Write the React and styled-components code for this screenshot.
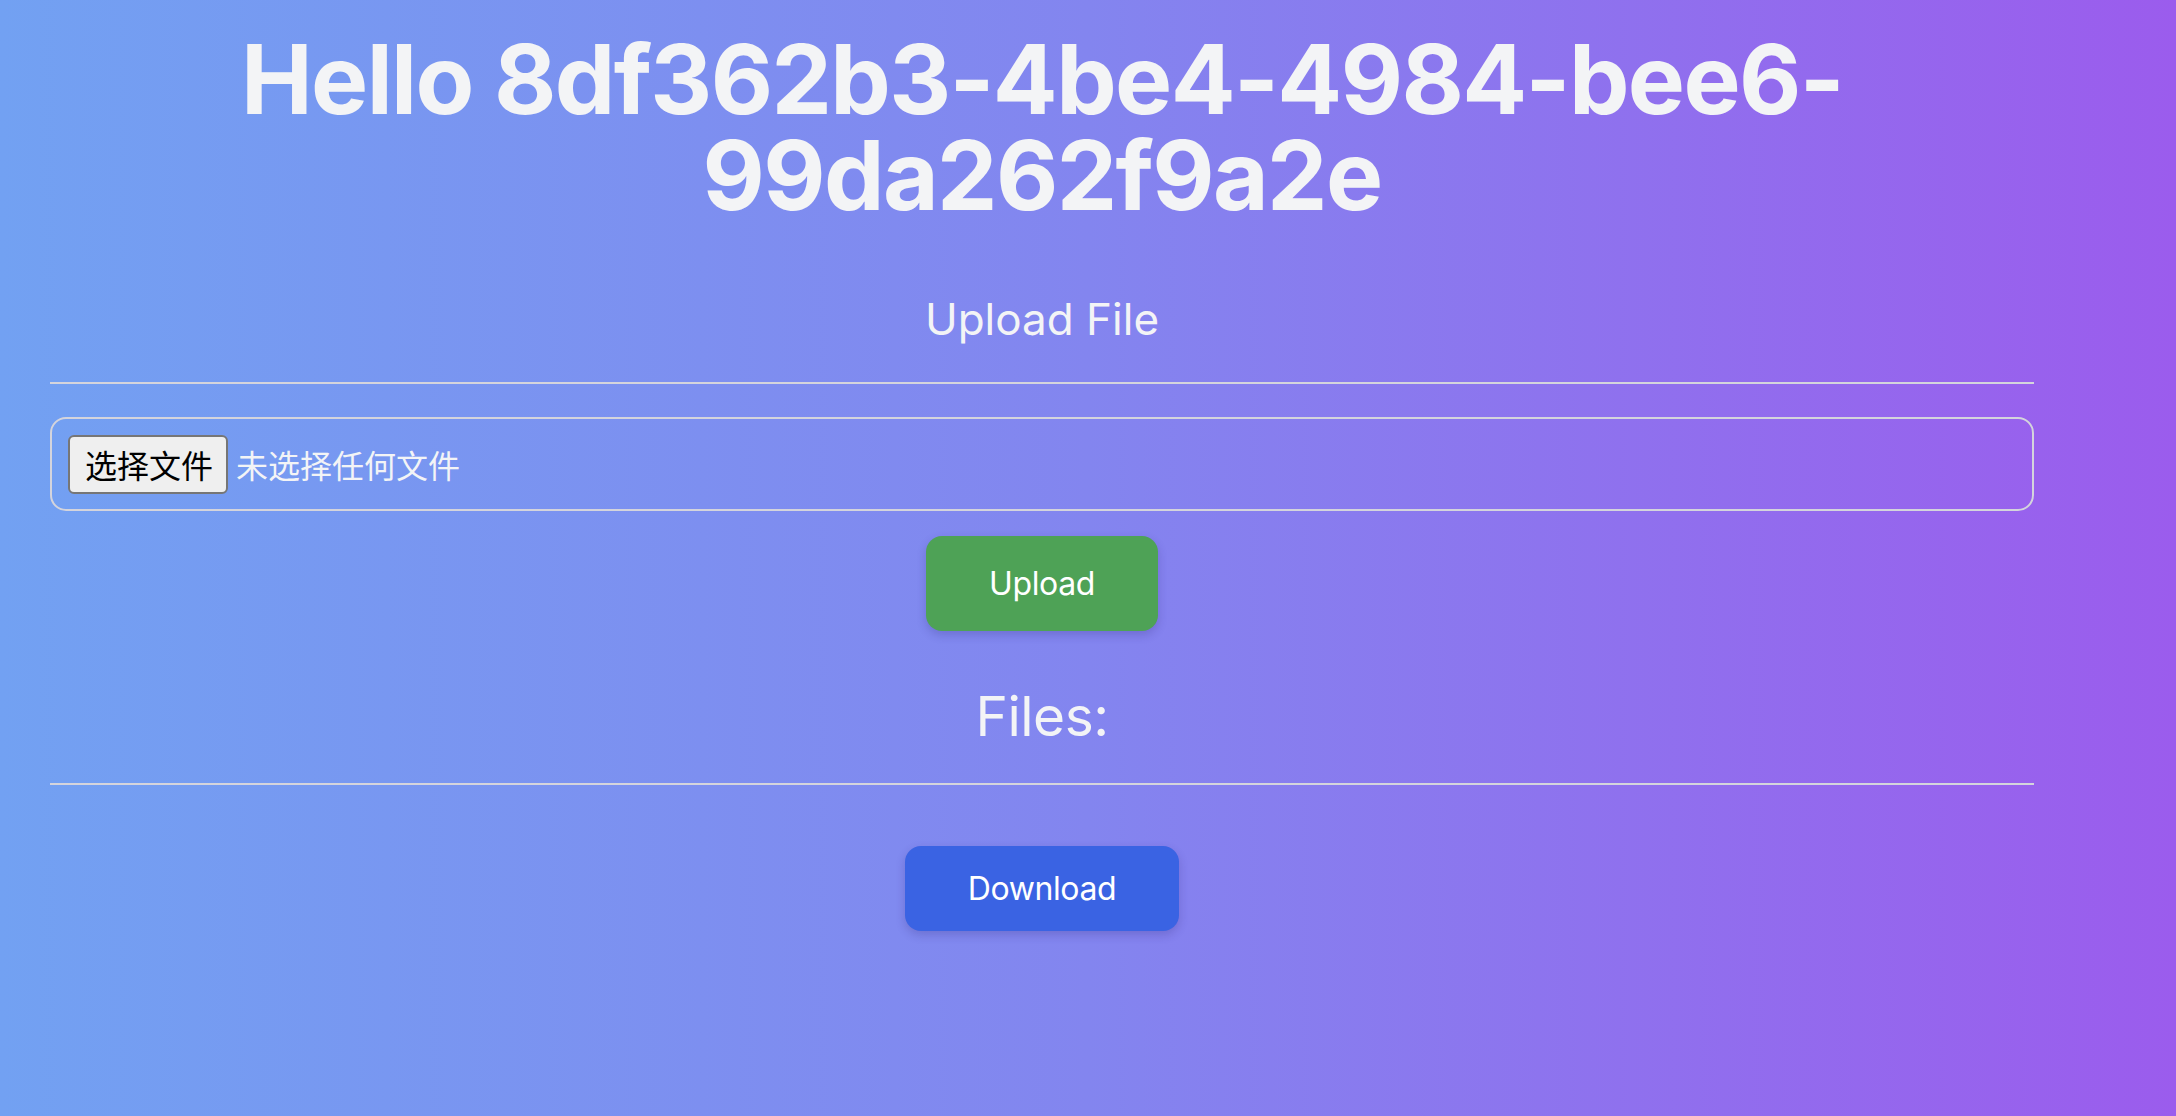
import React from "react";
import styled, { createGlobalStyle } from "styled-components";

const GlobalStyle = createGlobalStyle`
  html, body {
    margin: 0;
    padding: 0;
  }
  body {
    font-family: Inter, "Noto Sans", "Noto Sans CJK SC", sans-serif;
  }
  * { box-sizing: border-box; }
`;

const Page = styled.div`
  min-height: 100vh;
  background: linear-gradient(90deg, #72a1f2 0%, #8385ef 50%, #9b5ced 100%);
  color: #f3f4f6;
  padding: 31px 0 40px 50px;
`;

const Container = styled.main`
  width: 1984px;
  display: flex;
  flex-direction: column;
  align-items: center;
`;

const Title = styled.h1`
  margin: 0;
  width: 100%;
  text-align: center;
  font-size: 96px;
  line-height: 96px;
  font-weight: 700;
  letter-spacing: -1.6px;
  color: #f3f4f6;
`;

const SectionTitle = styled.h2`
  margin: ${(p) => p.$top}px 0 0;
  font-size: ${(p) => p.$size}px;
  line-height: ${(p) => p.$lh}px;
  letter-spacing: ${(p) => p.$ls || 0}px;
  font-weight: 400;
  color: #f3f4f6;
  text-align: center;
`;

const Divider = styled.hr`
  width: 100%;
  height: 2px;
  border: 0;
  margin: ${(p) => p.$top}px 0 0;
  background: #d4d4dc;
`;

const FileField = styled.label`
  width: 100%;
  margin-top: 33px;
  height: 94px;
  display: flex;
  align-items: center;
  padding: 0 16px;
  border: 2px solid #d4d4dc;
  border-radius: 16px;
  cursor: pointer;

  input {
    display: none;
  }
`;

const ChooseButton = styled.span`
  display: inline-flex;
  align-items: center;
  height: 59px;
  padding: 0 13px 0 15px;
  background: #efefef;
  color: #000;
  border: 2px solid #767676;
  border-radius: 6px;
  font-family: "Noto Sans CJK SC", sans-serif;
  font-size: 32px;
  line-height: 1;
`;

const FileStatus = styled.span`
  margin-left: 8px;
  font-family: "Noto Sans CJK SC", sans-serif;
  font-size: 32px;
  line-height: 1;
  color: #f3f4f6;
`;

const ActionButton = styled.button`
  margin-top: ${(p) => p.$top}px;
  border: 0;
  border-radius: 16px;
  background: ${(p) => p.$bg};
  color: #fff;
  font-family: Inter, "Noto Sans", sans-serif;
  font-size: 32px;
  line-height: 47px;
  letter-spacing: -0.4px;
  padding: ${(p) => p.$padY}px ${(p) => p.$padX}px;
  box-shadow: 0 4px 10px rgba(40, 30, 110, 0.22);
  cursor: pointer;
`;

export default function App() {
  return (
    <>
      <GlobalStyle />
      <Page>
        <Container>
          <Title>Hello 8df362b3-4be4-4984-bee6-99da262f9a2e</Title>
          <SectionTitle $top={70} $size={44} $lh={52}>
            Upload File
          </SectionTitle>
          <Divider $top={37} />
          <FileField>
            <input type="file" />
            <ChooseButton>选择文件</ChooseButton>
            <FileStatus>未选择任何文件</FileStatus>
          </FileField>
          <ActionButton $top={25} $bg="#4ea256" $padY={24} $padX={63}>
            Upload
          </ActionButton>
          <SectionTitle $top={51} $size={55} $lh={68} $ls={-0.5}>
            Files:
          </SectionTitle>
          <Divider $top={33} />
          <ActionButton $top={61} $bg="#3a63e3" $padY={19} $padX={63}>
            Download
          </ActionButton>
        </Container>
      </Page>
    </>
  );
}
